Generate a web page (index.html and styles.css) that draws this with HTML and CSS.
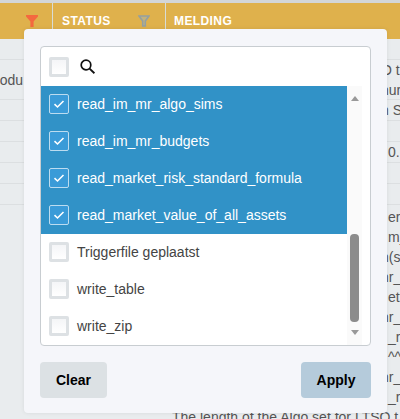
FILE: index.html
```html
<!DOCTYPE html>
<html lang="nl">
<head>
    <meta charset="UTF-8">
    <meta name="viewport" content="width=device-width, initial-scale=1.0">
    <title>Meldingen</title>
    <link rel="stylesheet" href="styles.css">
</head>
<body>

    <!-- Tabel achter de filter popup -->
    <div class="table">
        <div class="row head-row">
            <div class="cell head-cell filter-cell">
                <svg class="funnel" width="12" height="12" viewBox="0 0 12 12"><path d="M0 0H12V1.5L7.6 6.5V12H4.4V6.5L0 1.5Z" fill="#f4693f"/></svg>
            </div>
            <div class="cell head-cell">
                <span>STATUS</span>
                <svg class="funnel" width="12" height="12" viewBox="0 0 12 12"><path d="M1 1H11L7.3 6V11H4.7V6Z" fill="#c3b27c" stroke="#95a0a0" stroke-width="1.6"/></svg>
            </div>
            <div class="cell head-cell">MELDING</div>
        </div>
        <div class="row"><div class="cell"></div><div class="cell"></div><div class="cell"></div></div>
        <div class="row row-double">
            <div class="cell left-text">odu</div>
            <div class="cell"></div>
            <div class="cell"><div class="tail">O t</div><div class="tail">nur</div></div>
        </div>
        <div class="row"><div class="cell"></div><div class="cell"></div><div class="cell"><div class="tail">n S</div></div></div>
        <div class="row"><div class="cell"></div><div class="cell"></div><div class="cell"></div></div>
        <div class="row"><div class="cell"></div><div class="cell"></div><div class="cell"><div class="tail-in">0.</div></div></div>
        <div class="row"><div class="cell"></div><div class="cell"></div><div class="cell"></div></div>
        <div class="row"><div class="cell"></div><div class="cell"></div><div class="cell"></div></div>
        <div class="row row-long">
            <div class="cell"></div>
            <div class="cell"></div>
            <div class="cell">
                <div class="tail-in">er</div>
                <div class="tail-in">m_</div>
                <div class="tail">n(s</div>
                <div class="tail">nr_</div>
                <div class="tail-in">ett</div>
                <div class="tail">nr_</div>
                <div class="tail-in">_re</div>
                <div class="tail-in">^^^</div>
                <div class="tail">nr_</div>
                <div class="tail-in">_re</div>
                <div class="full-line">The length of the Algo set for LTSQ t</div>
            </div>
        </div>
    </div>

    <!-- Filter popup -->
    <div class="popup">
        <div class="list-box">
            <div class="search-row">
                <span class="check"></span>
                <svg class="search-icon" width="18" height="18" viewBox="0 0 18 18"><circle cx="7" cy="7" r="4.8" fill="none" stroke="#111" stroke-width="1.7"/><path d="M10.6 10.6L15.4 15.2" stroke="#111" stroke-width="1.9"/></svg>
            </div>
            <div class="list-body">
                <div class="items">
                    <div class="item selected"><span class="check"><svg width="12" height="10" viewBox="0 0 12 10"><path d="M1.5 5.2L4.5 8L10.5 2" fill="none" stroke="#fff" stroke-width="1.6"/></svg></span>read_im_mr_algo_sims</div>
                    <div class="item selected"><span class="check"><svg width="12" height="10" viewBox="0 0 12 10"><path d="M1.5 5.2L4.5 8L10.5 2" fill="none" stroke="#fff" stroke-width="1.6"/></svg></span>read_im_mr_budgets</div>
                    <div class="item selected"><span class="check"><svg width="12" height="10" viewBox="0 0 12 10"><path d="M1.5 5.2L4.5 8L10.5 2" fill="none" stroke="#fff" stroke-width="1.6"/></svg></span>read_market_risk_standard_formula</div>
                    <div class="item selected"><span class="check"><svg width="12" height="10" viewBox="0 0 12 10"><path d="M1.5 5.2L4.5 8L10.5 2" fill="none" stroke="#fff" stroke-width="1.6"/></svg></span>read_market_value_of_all_assets</div>
                    <div class="item"><span class="check"></span>Triggerfile geplaatst</div>
                    <div class="item"><span class="check"></span>write_table</div>
                    <div class="item"><span class="check"></span>write_zip</div>
                </div>
                <div class="scrollbar">
                    <span class="arrow-up"></span>
                    <span class="thumb"></span>
                    <span class="arrow-down"></span>
                </div>
            </div>
        </div>
        <div class="buttons">
            <button class="btn clear-btn">Clear</button>
            <button class="btn apply-btn">Apply</button>
        </div>
    </div>

</body>
</html>
```

FILE: styles.css
```css
body {
    font-family: 'Liberation Sans', Arial, sans-serif;
    background-color: #e9ecee;
    color: #555;
    margin: 0;
    padding: 0;
    height: 419px;
    overflow: hidden;
    position: relative;
}

/* Tabel */
.table {
    border-top: 3px solid #d3d6d8;
    font-size: 14px;
    line-height: 20px;
}

.row {
    display: grid;
    grid-template-columns: 53px 113px 1fr;
    min-height: 21px;
    box-sizing: border-box;
    border-bottom: 1px solid #dcdfe1;
}

.cell {
    min-width: 0;
    white-space: nowrap;
    overflow: hidden;
}

.head-row {
    height: 36px;
    border-bottom: none;
    background-color: #dfb14c;
}

.head-cell {
    display: flex;
    align-items: center;
    justify-content: space-between;
    padding: 0 15px 0 9px;
    border-right: 1px solid #d8dcd6;
    font-size: 12px;
    font-weight: bold;
    letter-spacing: 0.4px;
    color: #fff;
}

.head-cell:last-child {
    border-right: none;
    padding-left: 8px;
}

.filter-cell {
    justify-content: flex-end;
    padding-right: 14px;
}

.funnel {
    flex-shrink: 0;
}

.row-double {
    height: 40px;
}

.left-text {
    display: flex;
    align-items: center;
    justify-content: flex-end;
    padding-right: 30px;
    overflow: hidden;
}

.tail {
    padding-left: 215px;
}

.tail-in {
    padding-left: 222px;
}

.full-line {
    padding-left: 6px;
}

.row-long {
    padding-top: 2px;
}

/* Filter popup */
.popup {
    position: absolute;
    left: 24px;
    top: 29px;
    width: 363px;
    height: 384px;
    box-sizing: border-box;
    padding: 17px 16px 15px;
    background-color: #f5f6fa;
    border-radius: 4px;
    box-shadow: 0 0 4px rgba(0, 0, 0, 0.08);
    display: flex;
    flex-direction: column;
    justify-content: space-between;
}

.list-box {
    height: 300px;
    box-sizing: border-box;
    background-color: #fff;
    border: 1px solid #c8cdd1;
    border-radius: 4px;
    font-size: 14px;
    color: #444;
}

.search-row {
    display: flex;
    align-items: center;
    gap: 10px;
    height: 39px;
    padding-left: 8px;
}

.list-body {
    display: flex;
}

.items {
    width: 306px;
}

.item {
    display: flex;
    align-items: center;
    gap: 8px;
    height: 37px;
    box-sizing: border-box;
    padding: 0 0 1px 8px;
}

.item.selected {
    background-color: #3192c7;
    color: #fff;
}

.check {
    width: 20px;
    height: 20px;
    box-sizing: border-box;
    border: 3px solid #dde1e4;
    border-radius: 2px;
    background: linear-gradient(#f4f5f7, #fff);
    flex-shrink: 0;
}

.selected .check {
    display: flex;
    align-items: center;
    justify-content: center;
    border: 1px solid #bcdcf0;
    background: #3a9bd8;
}

/* Scrollbar */
.scrollbar {
    width: 15px;
    height: 259px;
    box-sizing: border-box;
    background-color: #fafafa;
    display: flex;
    flex-direction: column;
    align-items: center;
    padding-top: 10px;
}

.arrow-up {
    border-style: solid;
    border-width: 0 4.5px 5px;
    border-color: transparent transparent #999;
}

.thumb {
    width: 9px;
    height: 88px;
    margin-top: 133px;
    background-color: #8c8c8c;
    border-radius: 4px;
}

.arrow-down {
    margin-top: 8px;
    border-style: solid;
    border-width: 5px 4.5px 0;
    border-color: #999 transparent transparent;
}

/* Knoppen */
.buttons {
    display: flex;
    justify-content: space-between;
}

.btn {
    height: 36px;
    border: none;
    border-radius: 4px;
    font-family: inherit;
    font-size: 14px;
    font-weight: bold;
    color: #000;
    padding: 0;
}

.clear-btn {
    width: 67px;
    background-color: #dce1e4;
}

.apply-btn {
    width: 70px;
    background-color: #b5cbdb;
}
```
